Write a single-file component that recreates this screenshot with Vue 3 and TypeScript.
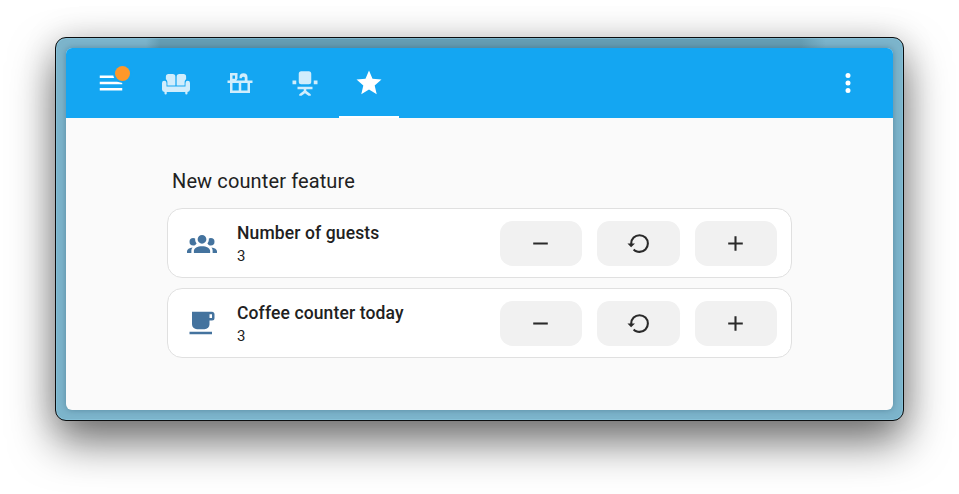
<script setup lang="ts">
import { ref } from 'vue'

interface Counter {
  name: string
  icon: string
  value: number
}

const tabs = [
  {
    label: 'Living room',
    path: 'M6.2 4.8H9.3A2.2 2.2 0 0 1 11.5 7V14H5.1V11.6C5.1 10.2 4.6 9.4 3.9 9V7A2.2 2.2 0 0 1 6.2 4.8ZM14.7 4.8H17.8A2.2 2.2 0 0 1 20.1 7V9C19.4 9.4 18.9 10.2 18.9 11.6V14H12.5V7A2.2 2.2 0 0 1 14.7 4.8ZM2.6 10.1A1.8 1.8 0 0 1 4.4 11.9V14.8H19.6V11.9A1.8 1.8 0 0 1 23.2 11.9V17.2A2 2 0 0 1 21.2 19.1V20.3A.8 .8 0 0 1 19.4 20.3V19.2H4.6V20.3A.8 .8 0 0 1 2.8 20.3V19.1A2 2 0 0 1 .8 17.2V11.9A1.8 1.8 0 0 1 2.6 10.1Z',
  },
  {
    label: 'Kitchen',
    path: 'M4 4H10V8.5L9 10H15.8V7.6A1.3 1.3 0 0 0 13.5 7.6V8.2H11.6V7.3A3.2 3.2 0 0 1 18 7.3V10H22V12H20V20H4V12H2V10H4V4M6 6V8.5H8V6H6M6 12V18H11V12H6M13 12V18H18V12H13Z',
  },
  {
    label: 'Office',
    path: 'M9 2.6H15A2 2 0 0 1 17 4.6V11A2 2 0 0 1 15 13H9A2 2 0 0 1 7 11V4.6A2 2 0 0 1 9 2.6M2 10H5V13H2V10M19 10H22V13H19V10M6 15H18V17H13V18.2L16.6 20.9V22.2H14.8L12 20.1L9.2 22.2H7.4V20.9L11 18.2V17H6V15Z',
  },
  {
    label: 'Favourites',
    path: 'M12,17.27L18.18,21L16.54,13.97L22,9.24L14.81,8.62L12,2L9.19,8.62L2,9.24L7.45,13.97L5.82,21L12,17.27Z',
  },
]
const active = ref(3)

const counters = ref<Counter[]>([
  {
    name: 'Number of guests',
    value: 3,
    icon: 'M12,5.5A3.5,3.5 0 0,1 15.5,9A3.5,3.5 0 0,1 12,12.5A3.5,3.5 0 0,1 8.5,9A3.5,3.5 0 0,1 12,5.5M5,8C5.56,8 6.08,8.15 6.53,8.42C6.38,9.85 6.8,11.27 7.66,12.38C7.16,13.34 6.16,14 5,14A3,3 0 0,1 2,11A3,3 0 0,1 5,8M19,8A3,3 0 0,1 22,11A3,3 0 0,1 19,14C17.84,14 16.84,13.34 16.34,12.38C17.2,11.27 17.62,9.85 17.47,8.42C17.92,8.15 18.44,8 19,8M5.5,18.25C5.5,16.18 8.41,14.5 12,14.5C15.59,14.5 18.5,16.18 18.5,18.25V20H5.5V18.25M0,20V18.5C0,17.11 1.89,15.94 4.45,15.6C3.86,16.28 3.5,17.22 3.5,18.25V20H0M24,20H20.5V18.25C20.5,17.22 20.14,16.28 19.55,15.6C22.11,15.94 24,17.11 24,18.5V20Z',
  },
  {
    name: 'Coffee counter today',
    value: 3,
    icon: 'M2,21H20V19H2M20,8H18V5H20M20,3H4V13A4,4 0 0,0 8,17H14A4,4 0 0,0 18,13V10H20A2,2 0 0,0 22,8V5C22,3.89 21.1,3 20,3Z',
  },
])

const actions = [
  { label: 'Decrement', path: 'M19,13H5V11H19V13Z', run: (c: Counter) => c.value-- },
  {
    label: 'Reset',
    path: 'M13,3A9,9 0 0,0 4,12H1.4L4.9,15.7L8.6,12H6A7,7 0 0,1 13,5A7,7 0 0,1 20,12A7,7 0 0,1 13,19C11.07,19 9.32,18.21 8.06,16.94L6.64,18.36C8.27,20 10.5,21 13,21A9,9 0 0,0 22,12A9,9 0 0,0 13,3Z',
    run: (c: Counter) => (c.value = 0),
  },
  { label: 'Increment', path: 'M19,13H13V19H11V13H5V11H11V5H13V11H19V13Z', run: (c: Counter) => c.value++ },
]
</script>

<template>
  <div class="desktop">
    <div class="frame">
      <div class="window">
        <header class="toolbar">
          <button class="menu" aria-label="Menu">
            <svg viewBox="0 0 24 24"><path d="M3,6H21V8H3V6M3,11H21V13H3V11M3,16H21V18H3V16Z" /></svg>
            <span class="dot"></span>
          </button>
          <nav class="tabs">
            <button
              v-for="(tab, i) in tabs"
              :key="tab.label"
              class="tab"
              :class="{ active: i === active }"
              :aria-label="tab.label"
              @click="active = i"
            >
              <svg viewBox="0 0 24 24"><path fill-rule="evenodd" :d="tab.path" /></svg>
            </button>
          </nav>
          <button class="more" aria-label="More">
            <svg viewBox="0 0 24 24">
              <path d="M12,16A2,2 0 0,1 14,18A2,2 0 0,1 12,20A2,2 0 0,1 10,18A2,2 0 0,1 12,16M12,10A2,2 0 0,1 14,12A2,2 0 0,1 12,14A2,2 0 0,1 10,12A2,2 0 0,1 12,10M12,4A2,2 0 0,1 14,6A2,2 0 0,1 12,8A2,2 0 0,1 10,6A2,2 0 0,1 12,4Z" />
            </svg>
          </button>
        </header>
        <main class="view">
          <h1 class="heading">New counter feature</h1>
          <section v-for="c in counters" :key="c.name" class="card">
            <svg class="entity" viewBox="0 0 24 24"><path :d="c.icon" /></svg>
            <div class="info">
              <span class="name">{{ c.name }}</span>
              <span class="state">{{ c.value }}</span>
            </div>
            <div class="controls">
              <button v-for="a in actions" :key="a.label" class="control" :aria-label="a.label" @click="a.run(c)">
                <svg viewBox="0 0 24 24"><path :d="a.path" /></svg>
              </button>
            </div>
          </section>
        </main>
      </div>
    </div>
  </div>
</template>

<style>
body {
  margin: 0;
  background: #fff;
}
</style>

<style scoped>
.desktop {
  box-sizing: border-box;
  width: 959px;
  height: 494px;
  padding: 37px 55px 73px;
  overflow: hidden;
  background: #fff;
  font-family: Roboto, "Liberation Sans", sans-serif;
  color: #212121;
}
.frame {
  box-sizing: border-box;
  width: 849px;
  height: 384px;
  padding: 10px;
  border: 1px solid #0b0d0e;
  border-radius: 11px;
  background:
    linear-gradient(90deg, transparent 90px, #659db3 104px, #659db3 745px, transparent 770px) top / 100% 20px no-repeat,
    #7cb4cb;
  box-shadow:
    inset 0 0 0 1px rgba(140, 200, 224, 0.55),
    0 21px 44px rgba(0, 0, 0, 0.55),
    0 0 34px rgba(0, 0, 0, 0.13);
}
.window {
  height: 362px;
  overflow: hidden;
  border-radius: 6px;
  background: #fafafa;
  box-shadow: 0 0 6px rgba(0, 30, 50, 0.28);
}
button {
  display: flex;
  align-items: center;
  justify-content: center;
  padding: 0;
  border: 0;
  background: none;
  color: inherit;
}
svg {
  display: block;
  width: 30px;
  height: 30px;
  fill: currentColor;
}
.toolbar {
  box-sizing: border-box;
  display: flex;
  height: 70px;
  padding: 0 30px;
  background: #14a6f2;
  color: #fff;
}
.menu {
  position: relative;
  width: 30px;
}
.dot {
  position: absolute;
  top: 18px;
  left: 19px;
  width: 15px;
  height: 15px;
  border-radius: 50%;
  background: #ff9829;
  box-shadow: 0 0 0 2px #14a6f2;
}
.tabs {
  display: flex;
  flex: 1;
  gap: 4.4px;
  margin-left: 20px;
}
.tab {
  box-sizing: border-box;
  width: 60px;
  padding-top: 2px;
  border-bottom: 2px solid transparent;
  color: #d0edfc;
}
.tab.active {
  border-color: #fff;
  color: #fff;
}
.view {
  display: flex;
  flex-direction: column;
  gap: 10px;
  width: 625px;
  margin: 0 auto;
  padding-top: 47px;
}
.heading {
  margin: 0 0 1px 5px;
  font-size: 20px;
  font-weight: 400;
  line-height: 32px;
  letter-spacing: 0.12px;
}
.card {
  box-sizing: border-box;
  display: flex;
  align-items: center;
  height: 70px;
  padding: 0 14px 0 19px;
  border: 1px solid #e0e0e0;
  border-radius: 15px;
  background: #fff;
}
.entity {
  color: #44739e;
}
.info {
  display: flex;
  flex: 1;
  flex-direction: column;
  margin-left: 20px;
}
.name {
  font-size: 17.5px;
  font-weight: 500;
  line-height: 25px;
  letter-spacing: 0.12px;
}
.state {
  font-size: 15px;
  line-height: 20px;
}
.controls {
  display: grid;
  grid-template-columns: 81.8px 83px 82px;
  justify-content: space-between;
  width: 277px;
}
.control {
  height: 45px;
  border-radius: 12.5px;
  background: #f1f1f1;
  color: #2a2a2a;
}
.control svg {
  width: 25px;
  height: 25px;
}
</style>
